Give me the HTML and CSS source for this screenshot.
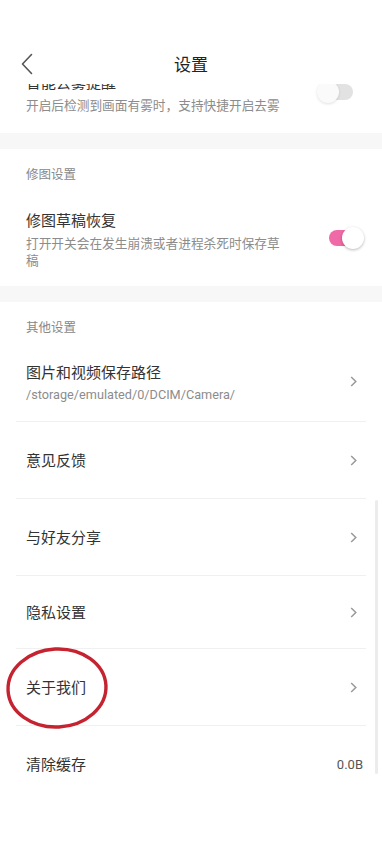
FILE: index.html
```html
<!DOCTYPE html>
<html lang="zh-CN">
<head>
    <meta charset="UTF-8">
    <meta name="viewport" content="width=device-width, initial-scale=1.0">
    <title>设置</title>
    <link rel="stylesheet" href="styles.css">
</head>
<body>
<div class="screen">

    <header class="topbar">
        <span class="back">
            <svg width="12" height="22" viewBox="0 0 12 22"><path d="M10.5 1.5 L1.5 11 L10.5 20.5" fill="none" stroke="#555" stroke-width="1.6" stroke-linecap="round" stroke-linejoin="round"/></svg>
        </span>
        <h1 class="title">设置</h1>
        <span></span>
    </header>

    <div class="viewport">
        <!-- list is scrolled a little, first row sits under the bar -->
        <div class="list">
            <section class="group group-first">
                <div class="row row-switch">
                    <div class="text">
                        <p class="row-title">智能去雾提醒</p>
                        <p class="row-sub">开启后检测到画面有雾时，支持快捷开启去雾</p>
                    </div>
                    <span class="toggle toggle-off"><span class="knob"></span></span>
                </div>
            </section>

            <section class="group">
                <p class="group-label">修图设置</p>
                <div class="row row-switch">
                    <div class="text">
                        <p class="row-title">修图草稿恢复</p>
                        <p class="row-sub">打开开关会在发生崩溃或者进程杀死时保存草稿</p>
                    </div>
                    <span class="toggle toggle-on"><span class="knob"></span></span>
                </div>
            </section>

            <section class="group">
                <p class="group-label">其他设置</p>
                <div class="row row-path line">
                    <div class="text">
                        <p class="row-title">图片和视频保存路径</p>
                        <p class="row-sub path">/storage/emulated/0/DCIM/Camera/</p>
                    </div>
                    <span class="arrow"><svg width="7" height="11" viewBox="0 0 7 11"><path d="M1.2 1 L5.8 5.5 L1.2 10" fill="none" stroke="#999" stroke-width="1.5"/></svg></span>
                </div>
                <div class="row row-plain line">
                    <span class="row-title">意见反馈</span>
                    <span class="arrow"><svg width="7" height="11" viewBox="0 0 7 11"><path d="M1.2 1 L5.8 5.5 L1.2 10" fill="none" stroke="#999" stroke-width="1.5"/></svg></span>
                </div>
                <div class="row row-plain line">
                    <span class="row-title">与好友分享</span>
                    <span class="arrow"><svg width="7" height="11" viewBox="0 0 7 11"><path d="M1.2 1 L5.8 5.5 L1.2 10" fill="none" stroke="#999" stroke-width="1.5"/></svg></span>
                </div>
                <div class="row row-plain row-short line">
                    <span class="row-title">隐私设置</span>
                    <span class="arrow"><svg width="7" height="11" viewBox="0 0 7 11"><path d="M1.2 1 L5.8 5.5 L1.2 10" fill="none" stroke="#999" stroke-width="1.5"/></svg></span>
                </div>
                <div class="row row-plain line about">
                    <span class="row-title">关于我们</span>
                    <span class="arrow"><svg width="7" height="11" viewBox="0 0 7 11"><path d="M1.2 1 L5.8 5.5 L1.2 10" fill="none" stroke="#999" stroke-width="1.5"/></svg></span>
                    <svg class="circle-mark" width="106" height="88" viewBox="0 0 106 88"><ellipse cx="52" cy="43" rx="49" ry="39" transform="rotate(-3 52 43)" fill="none" stroke="#c4232f" stroke-width="3.4"/></svg>
                </div>
                <div class="row row-plain">
                    <span class="row-title">清除缓存</span>
                    <span class="value">0.0B</span>
                </div>
            </section>
        </div>
        <div class="scrollbar"></div>
    </div>

</div>
</body>
</html>
```

FILE: styles.css
```css
body {
    margin: 0;
    background: #fff;
    font-family: "Noto Sans CJK SC", "Noto Sans", sans-serif;
    color: #333;
}
p {
    margin: 0;
}
.screen {
    width: 382px;
    height: 850px;
    overflow: hidden;
    background: #fff;
}
.topbar {
    height: 40px;
    padding-top: 44px;
    display: grid;
    grid-template-columns: 1fr auto 1fr;
    align-items: center;
    background: #fff;
    position: relative;
    z-index: 2;
}
.back {
    padding-left: 21px;
    display: flex;
    align-items: center;
}
.title {
    margin: 0;
    font-size: 17px;
    font-weight: 400;
    color: #222;
    line-height: 24px;
}
.viewport {
    position: relative;
    height: 766px;
    overflow: hidden;
}
.list {
    margin-top: -14px;
}
.group {
    border-bottom: 16px solid #f7f7f7;
    padding-top: 16px;
}
.group:last-child {
    border-bottom: none;
}
.group-first {
    padding-top: 0;
}
.group-label {
    padding-left: 26px;
    font-size: 12.5px;
    line-height: 18px;
    color: #888;
}
.row {
    margin: 0 16px;
    padding: 0 3px 0 10px;
    display: flex;
    align-items: center;
    justify-content: space-between;
    position: relative;
}
.line {
    border-bottom: 1px solid #f0f0f0;
}
.row-switch {
    padding-top: 25px;
    padding-bottom: 18px;
}
.group-first .row-switch {
    padding-top: 0;
    padding-bottom: 20px;
}
.row-path {
    padding-top: 24px;
    padding-bottom: 18px;
}
.row-plain {
    height: 76px;
}
.row-short {
    height: 72px;
}
.text {
    width: 260px;
}
.row-title {
    font-size: 15px;
    line-height: 24px;
    color: #333;
}
.row-sub {
    margin-top: 2px;
    font-size: 12.7px;
    line-height: 17px;
    color: #8c8c8c;
}
.path {
    font-family: Roboto, sans-serif;
    font-size: 12.7px;
    white-space: nowrap;
}
.arrow {
    margin-right: 6px;
    display: flex;
}
.value {
    font-family: Roboto, sans-serif;
    font-size: 13px;
    color: #555;
}
.toggle {
    position: relative;
    width: 34px;
    height: 16px;
    border-radius: 8px;
}
.toggle .knob {
    position: absolute;
    top: -3px;
    width: 22px;
    height: 22px;
    border-radius: 50%;
    background: #fff;
    box-shadow: 0 1px 3px rgba(0, 0, 0, 0.28);
}
.toggle-off {
    background: #e2e2e2;
    margin-right: 10px;
}
.toggle-off .knob {
    left: -2px;
    background: #fafafa;
    box-shadow: 0 1px 3px rgba(0, 0, 0, 0.12);
}
.toggle-on {
    background: #ef6aa6;
}
.toggle-on .knob {
    right: -1px;
}
.circle-mark {
    position: absolute;
    left: -11px;
    top: -4px;
    pointer-events: none;
}
.scrollbar {
    position: absolute;
    right: 4px;
    top: 416px;
    width: 3px;
    height: 274px;
    background: #ececec;
    border-radius: 2px;
}
```
